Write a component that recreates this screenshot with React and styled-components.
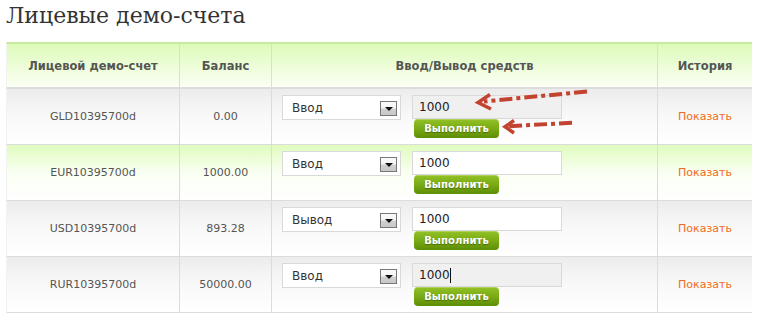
import React from 'react';
import styled, { createGlobalStyle } from 'styled-components';

const Global = createGlobalStyle`
  html, body { margin: 0; padding: 0; background: #fff; }
  body { font-family: "DejaVu Sans", Verdana, sans-serif; }
  * { box-sizing: border-box; }
`;

const Page = styled.div`
  position: relative;
  width: 762px;
  height: 321px;
  padding: 0 10px 0 6px;
  overflow: hidden;
`;

const Title = styled.h1`
  margin: 0;
  height: 42px;
  padding-top: 1px;
  font-family: "DejaVu Serif", Georgia, serif;
  font-weight: normal;
  font-size: 22px;
  line-height: 30px;
  color: #333;
`;

const Table = styled.table`
  width: 746px;
  table-layout: fixed;
  border-collapse: separate;
  border-spacing: 0;
`;

const Th = styled.th`
  height: 47px;
  padding: 0;
  border-top: 2px solid #c8eaa0;
  border-bottom: 2px solid #dcdcdc;
  border-right: ${p => (p.$last ? 'none' : '1px solid #dcdcdc')};
  border-left: ${p => (p.$first ? '1px solid #f2f2f2' : 'none')};
  background: linear-gradient(#ddfbba, #fbfff4);
  font-size: 11.5px;
  font-weight: bold;
  color: #555;
  text-align: center;
  vertical-align: middle;
`;

const Tr = styled.tr`
  background: ${p =>
    p.$green
      ? 'linear-gradient(#dffcbd 0px, #fafff3 28px, #fff 56px)'
      : 'linear-gradient(#ececec 0px, #f9f9f9 28px, #fff 56px)'};
`;

const Td = styled.td`
  height: 56px;
  padding: 0;
  border-bottom: 1px solid #dcdcdc;
  border-right: ${p => (p.$last ? 'none' : '1px solid #dcdcdc')};
  border-left: ${p => (p.$first ? '1px solid #f2f2f2' : 'none')};
  font-size: 11px;
  color: #555;
  text-align: center;
  vertical-align: middle;
`;

const ActionTd = styled(Td)`
  text-align: left;
  vertical-align: top;
`;

const Actions = styled.div`
  display: flex;
  gap: 11px;
  padding: 6px 0 0 10px;
`;

const Select = styled.div`
  width: 119px;
  height: 25px;
  border: 1px solid #d9d9d9;
  background: #fff;
  display: flex;
  align-items: center;
  justify-content: space-between;
  padding: 0 3px 0 9px;
  font-size: 12px;
  color: #333;
`;

const SelectArrow = styled.span`
  width: 17px;
  height: 15px;
  margin-top: 2px;
  border: 1px solid #777;
  background: linear-gradient(#fbfbfb 0%, #f4f4f4 45%, #cfcfcf 55%, #c8c8c8 100%);
  display: flex;
  align-items: center;
  justify-content: center;
  &::after {
    content: '';
    width: 0;
    height: 0;
    border-left: 4px solid transparent;
    border-right: 4px solid transparent;
    border-top: 4px solid #111;
    margin-top: 1px;
  }
`;

const Stack = styled.div`
  display: flex;
  flex-direction: column;
  align-items: flex-start;
`;

const Field = styled.div`
  width: 150px;
  height: 24px;
  border: 1px solid #d9d9d9;
  background: ${p => (p.$gray ? '#f0f0f0' : '#fff')};
  display: flex;
  align-items: center;
  padding-left: 6px;
  font-size: 12px;
  color: #222;
`;

const Caret = styled.span`
  display: inline-block;
  width: 1px;
  height: 15px;
  background: #111;
`;

const Button = styled.button`
  margin: 0 0 0 2px;
  width: 85px;
  height: 19px;
  padding: 0;
  border: none;
  border-radius: 4px;
  background: linear-gradient(#93c229 0%, #7aab13 50%, #5e8e05 100%);
  box-shadow: inset 0 1px 0 rgba(255,255,255,0.25);
  color: #fff;
  font-family: "DejaVu Sans", Verdana, sans-serif;
  font-size: 10px;
  font-weight: bold;
  text-shadow: 0 1px 1px rgba(0,0,0,0.35);
  letter-spacing: 0.1px;
`;

const Link = styled.a`
  color: #f26a1b;
  text-decoration: none;
  font-size: 11px;
`;

const Overlay = styled.svg`
  position: absolute;
  left: 0;
  top: 0;
  pointer-events: none;
`;

const rows = [
  { acc: 'GLD10395700d', bal: '0.00', op: 'Ввод', gray: true },
  { acc: 'EUR10395700d', bal: '1000.00', op: 'Ввод', green: true },
  { acc: 'USD10395700d', bal: '893.28', op: 'Вывод' },
  { acc: 'RUR10395700d', bal: '50000.00', op: 'Ввод', gray: true, caret: true },
];

const RED = '#c2432f';

export default function App() {
  return (
    <Page>
      <Global />
      <Title>Лицевые демо-счета</Title>
      <Table>
        <colgroup>
          <col style={{ width: 174 }} />
          <col style={{ width: 92 }} />
          <col style={{ width: 386 }} />
          <col style={{ width: 94 }} />
        </colgroup>
        <thead>
          <tr>
            <Th $first>Лицевой демо-счет</Th>
            <Th>Баланс</Th>
            <Th>Ввод/Вывод средств</Th>
            <Th $last>История</Th>
          </tr>
        </thead>
        <tbody>
          {rows.map(r => (
            <Tr key={r.acc} $green={r.green}>
              <Td $first>{r.acc}</Td>
              <Td>{r.bal}</Td>
              <ActionTd>
                <Actions>
                  <Select>
                    {r.op}
                    <SelectArrow />
                  </Select>
                  <Stack>
                    <Field $gray={r.gray}>
                      1000{r.caret && <Caret />}
                    </Field>
                    <Button>Выполнить</Button>
                  </Stack>
                </Actions>
              </ActionTd>
              <Td $last>
                <Link href="#">Показать</Link>
              </Td>
            </Tr>
          ))}
        </tbody>
      </Table>
      <Overlay width="762" height="321" viewBox="0 0 762 321">
        <g stroke={RED} strokeWidth="4" fill="none" strokeLinecap="butt">
          <line x1="587" y1="91.5" x2="484" y2="101.5" strokeDasharray="13 4 4 4" />
          <polyline points="490,94.5 478,102.5 491,109" strokeWidth="3.5" strokeLinejoin="miter" />
          <line x1="572" y1="122.7" x2="509" y2="126.3" strokeDasharray="13 4 4 4" />
          <polyline points="514,120.5 505,126.7 514,133" strokeWidth="3.5" strokeLinejoin="miter" />
        </g>
      </Overlay>
    </Page>
  );
}
